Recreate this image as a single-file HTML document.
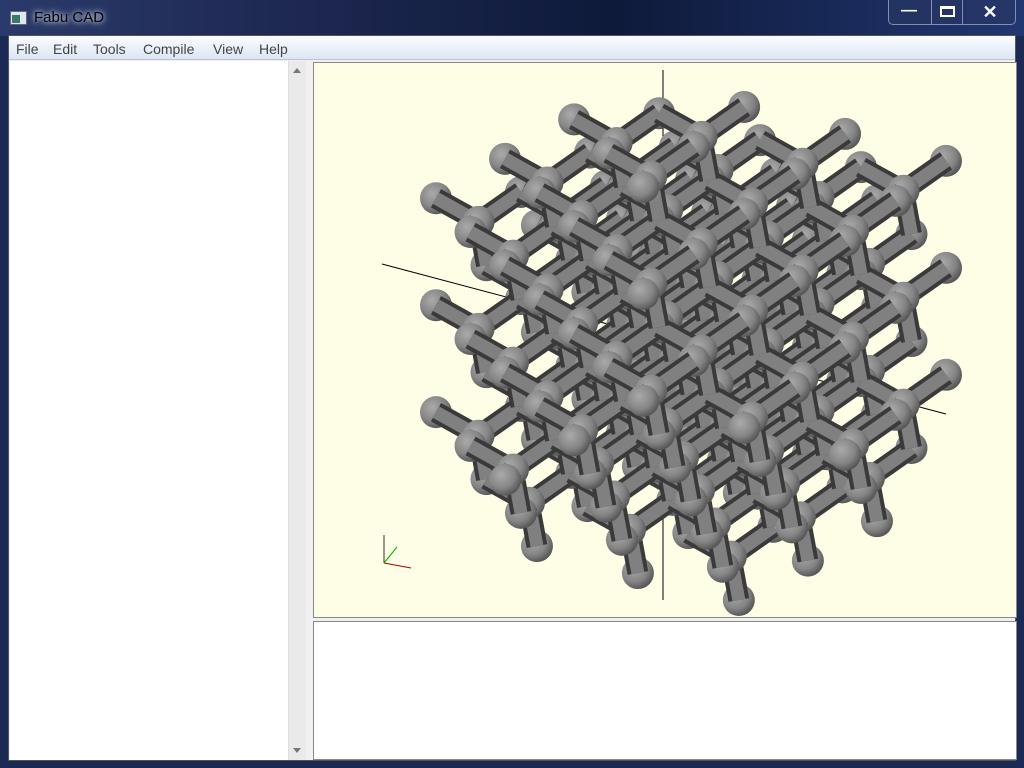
<!DOCTYPE html>
<html><head><meta charset="utf-8"><style>
*{margin:0;padding:0;box-sizing:border-box}
body{width:1024px;height:768px;overflow:hidden;background:#1b2a55;font-family:"Liberation Sans",sans-serif;position:relative}
#title{position:absolute;left:0;top:0;width:1024px;height:36px;background:linear-gradient(90deg,#2a3a6a 0%,#1d2750 30%,#0e1a3a 60%,#223670 100%)}
#title .t{position:absolute;left:34px;top:9px;font-size:15px;color:#000;text-shadow:0 0 8px #cfd8ea,0 0 4px #cfd8ea}
#icon{position:absolute;left:10px;top:11px;width:17px;height:14px;background:#dfe6ee;border:1px solid #667}
#icon:after{content:"";position:absolute;left:1px;top:3px;width:8px;height:8px;background:#3a7a6a}
#btns{position:absolute;left:888px;top:0;width:128px;height:25px;border:1px solid #8090b0;border-top:none;border-radius:0 0 5px 5px;background:rgba(40,55,100,.6)}
#btns div{position:absolute;top:0;height:24px;color:#fff;font-weight:bold;text-align:center}
#client{position:absolute;left:8px;top:35px;width:1008px;height:726px;background:#f0f0f0;border:1px solid #555}
#menu{position:absolute;left:0;top:0;width:1006px;height:24px;background:linear-gradient(#fafcff,#dde6f3);border-bottom:1px solid #b8c4d6}
#menu span{position:absolute;top:5px;font-size:14px;color:#444}
#left{position:absolute;left:1px;top:25px;width:278px;height:699px;background:#fff}
#sb{position:absolute;left:279px;top:25px;width:18px;height:699px;background:#eaeaea;border-left:1px solid #ddd}
#view{position:absolute;left:304px;top:26px;width:704px;height:556px;background:#fefee6;border:1px solid #888;overflow:hidden}
#out{position:absolute;left:304px;top:585px;width:704px;height:139px;background:#fff;border:1px solid #888}
</style></head><body>
<div id="title"><div id="icon"></div><div class="t">Fabu CAD</div>
<div id="btns"><div style="left:0;width:40px;font-size:16px;line-height:22px">&#8212;</div><div style="left:42px;width:32px;border-left:1px solid #8090b0;border-right:1px solid #8090b0"><span style="display:inline-block;margin-top:6px;width:15px;height:11px;border:2px solid #fff;border-top-width:3px"></span></div><div style="left:76px;width:50px;font-size:18px;line-height:24px">✕</div></div>
</div>
<div id="client">
<div id="menu"><span style="left:7px">File</span><span style="left:44px">Edit</span><span style="left:84px">Tools</span><span style="left:134px">Compile</span><span style="left:204px">View</span><span style="left:250px">Help</span></div>
<div id="left"></div>
<div id="sb"><div style="position:absolute;left:4px;top:7px;border:4px solid transparent;border-bottom:5px solid #777;border-top:none"></div><div style="position:absolute;left:4px;bottom:7px;border:4px solid transparent;border-top:5px solid #777;border-bottom:none"></div></div>
<div id="view"><svg id="s" width="702" height="554" viewBox="313 63 702 554" xmlns="http://www.w3.org/2000/svg">
<defs><radialGradient id="g" cx="0.38" cy="0.35" r="0.7"><stop offset="0" stop-color="#aaaaaa"/><stop offset="0.6" stop-color="#858585"/><stop offset="1" stop-color="#505050"/></radialGradient></defs>
<line x1="381" y1="264" x2="945" y2="414" stroke="#000" stroke-width="1"/>
<line x1="662" y1="70" x2="662" y2="600" stroke="#000" stroke-width="1"/>
<g id="L"></g>
<line x1="383" y1="563" x2="383" y2="535" stroke="#333"/><line x1="383" y1="563" x2="410" y2="568" stroke="#a00"/><line x1="383" y1="563" x2="396" y2="547" stroke="#0a0"/>
</svg></div>
<div id="out"></div>
</div>
<script>
var N=3,M=4*N,atoms=[],key={};
for(var x=0;x<=M;x++)for(var y=0;y<=M;y++)for(var z=0;z<=M;z++){
 var ok=false;
 if(x%2==0&&y%2==0&&z%2==0&&((x+y+z)%4==0))ok=true;
 if(x%2==1&&y%2==1&&z%2==1&&((x+y+z-3)%4==0))ok=true;
 if(ok){key[x+","+y+","+z]=atoms.length;atoms.push([x,y,z]);}
}
var a=0.6,b=0.42;
function pr(p){var X=p[0]-M/2,Y=p[1]-M/2,Z=p[2]-M/2;
 var x1=X*Math.cos(a)-Z*Math.sin(a),z1=X*Math.sin(a)+Z*Math.cos(a);
 var y2=Y*Math.cos(b)-z1*Math.sin(b),z2=Y*Math.sin(b)+z1*Math.cos(b);
 return [x1,-y2,z2];}
var P=atoms.map(pr),mnx=1e9,mxx=-1e9,mny=1e9,mxy=-1e9;
P.forEach(function(p){mnx=Math.min(mnx,p[0]);mxx=Math.max(mxx,p[0]);mny=Math.min(mny,p[1]);mxy=Math.max(mxy,p[1]);});
var sx=(945-435)/(mxx-mnx),sy=(600-80)/(mxy-mny);
function S(p){return [435+(p[0]-mnx)*sx,80+(p[1]-mny)*sy];}
var items=[],deg=atoms.map(function(){return 0;});
atoms.forEach(function(p,i){if(p[0]%2==1){
 [[-1,-1,-1],[1,1,-1],[1,-1,1],[-1,1,1]].forEach(function(d){
  var k=(p[0]+d[0])+","+(p[1]+d[1])+","+(p[2]+d[2]);
  if(key[k]!==undefined){var j=key[k];deg[i]++;deg[j]++;items.push({t:0,i:i,j:j,d:(P[i][2]+P[j][2])/2+0.01});}
 });}});
atoms.forEach(function(p,i){if(deg[i]>0)items.push({t:1,i:i,d:P[i][2]});});
items.sort(function(u,v){return v.d-u.d;});
var h="";
items.forEach(function(it){
 if(it.t==0){var A=S(P[it.i]),B=S(P[it.j]);
  h+='<line x1="'+A[0]+'" y1="'+A[1]+'" x2="'+B[0]+'" y2="'+B[1]+'" stroke="#3a3a3a" stroke-width="21"/>';
  h+='<line x1="'+A[0]+'" y1="'+A[1]+'" x2="'+B[0]+'" y2="'+B[1]+'" stroke="#808080" stroke-width="13"/>';
 }else{var A=S(P[it.i]);h+='<circle cx="'+A[0]+'" cy="'+A[1]+'" r="16" fill="url(#g)"/>';}
});
document.getElementById("L").innerHTML=h;
</script>
</body></html>
